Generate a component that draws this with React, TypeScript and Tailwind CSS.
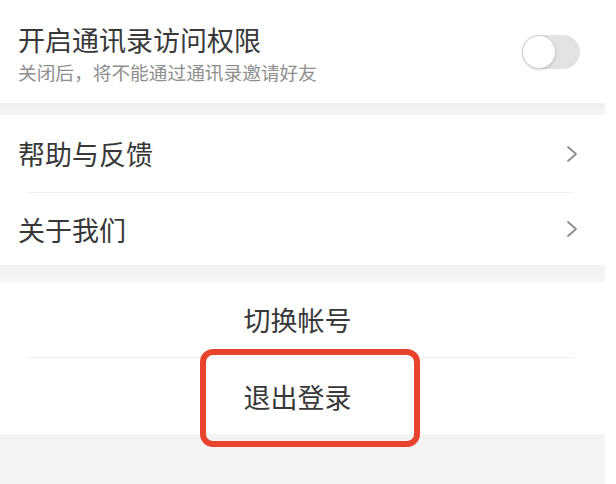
import React from "react";

function Chevron() {
  return (
    <svg width="12" height="18" viewBox="0 0 12 18" className="shrink-0">
      <polyline points="2,2 10,9 2,16" fill="none" stroke="#8c8c8c" strokeWidth="1.8" strokeLinecap="round" strokeLinejoin="round" />
    </svg>
  );
}

function Toggle() {
  return (
    <div className="relative h-[34px] w-[58px] rounded-full bg-[#e3e3e3]">
      <div className="absolute left-0 top-0 h-[34px] w-[34px] rounded-full border border-[#cfcfcf] bg-white shadow-[0_1px_2px_rgba(0,0,0,0.15)]" />
    </div>
  );
}

function Band({ h }: { h: string }) {
  return <div className={`${h} bg-gradient-to-b from-[#f1f1f1] to-[#f6f6f6]`} />;
}

function LinkRow({ label, h }: { label: string; h: string }) {
  return (
    <div className={`flex ${h} items-center justify-between pl-[18px] pr-[27px]`}>
      <span className="text-[27px] leading-none text-[#383838]">{label}</span>
      <Chevron />
    </div>
  );
}

export default function App() {
  return (
    <div
      className="h-[484px] w-[616px] overflow-hidden bg-white"
      style={{ fontFamily: '"Noto Sans CJK SC", "Noto Sans", sans-serif' }}
    >
      <div className="flex w-[605px] flex-col">
        <div className="flex h-[103px] items-center justify-between pl-[18px] pr-[25px]">
          <div className="flex flex-col pt-[4px]">
            <span className="text-[27px] leading-[34px] text-[#383838]">开启通讯录访问权限</span>
            <span className="mt-[2px] text-[18.7px] leading-[26px] text-[#8e8e8e]">
              关闭后，将不能通过通讯录邀请好友
            </span>
          </div>
          <Toggle />
        </div>

        <div className="h-[12px] bg-gradient-to-b from-[#f0f0f0] to-[#f6f6f6]" />

        <div className="flex flex-col">
          <LinkRow label="帮助与反馈" h="h-[77px]" />
          <div className="ml-[28px] mr-[32px] h-px bg-[#f0f0f0]" />
          <LinkRow label="关于我们" h="h-[72px]" />
        </div>

        <Band h="h-[17px]" />

        <div className="relative flex flex-col">
          <div className="flex h-[75px] items-center justify-center pr-[10px]">
            <span className="text-[27px] leading-none text-[#383838]">切换帐号</span>
          </div>
          <div className="ml-[28px] mr-[32px] h-px bg-[#f0f0f0]" />
          <div className="flex h-[76px] items-center justify-center pr-[10px]">
            <span className="text-[27px] leading-none text-[#383838]">退出登录</span>
          </div>
          <div className="pointer-events-none absolute left-[200px] top-[67px] h-[98px] w-[220px] rounded-[13px] border-[6px] border-[#e8432d]" />
        </div>

        <div className="h-[60px] bg-[#f4f4f4]" />
      </div>
    </div>
  );
}
